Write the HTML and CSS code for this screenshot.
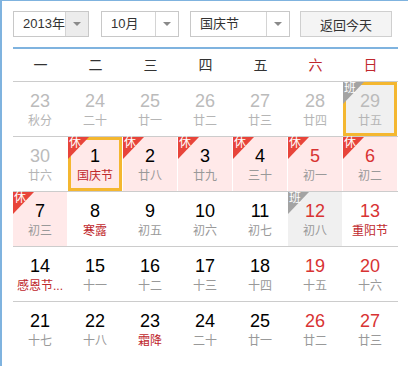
FILE: index.html
```html
<!DOCTYPE html>
<html lang="zh-CN">
<head>
    <meta charset="UTF-8">
    <title>万年历</title>
    <link rel="stylesheet" href="styles.css">
</head>
<body>

    <div class="calendar">
        <div class="toolbar">
            <div class="select select-year hover">
                <span class="select-text">2013年</span>
                <span class="select-arrow"></span>
            </div>
            <div class="select select-month">
                <span class="select-text">10月</span>
                <span class="select-arrow"></span>
            </div>
            <div class="select select-holiday">
                <span class="select-text">国庆节</span>
                <span class="select-arrow"></span>
            </div>
            <button class="today-btn">返回今天</button>
        </div>

        <div class="weekdays">
            <span>一</span><span>二</span><span>三</span><span>四</span><span>五</span>
            <span class="weekend">六</span><span class="weekend">日</span>
        </div>

        <div class="week">
            <div class="day other"><b>23</b><i>秋分</i></div>
            <div class="day other"><b>24</b><i>二十</i></div>
            <div class="day other"><b>25</b><i>廿一</i></div>
            <div class="day other"><b>26</b><i>廿二</i></div>
            <div class="day other"><b>27</b><i>廿三</i></div>
            <div class="day other"><b>28</b><i>廿四</i></div>
            <div class="day other work selected"><span class="badge">班</span><b>29</b><i>廿五</i></div>
        </div>

        <div class="week">
            <div class="day other"><b>30</b><i>廿六</i></div>
            <div class="day rest selected"><span class="badge">休</span><b>1</b><i class="fest">国庆节</i></div>
            <div class="day rest"><span class="badge">休</span><b>2</b><i>廿八</i></div>
            <div class="day rest"><span class="badge">休</span><b>3</b><i>廿九</i></div>
            <div class="day rest"><span class="badge">休</span><b>4</b><i>三十</i></div>
            <div class="day rest red"><span class="badge">休</span><b>5</b><i>初一</i></div>
            <div class="day rest red"><span class="badge">休</span><b>6</b><i>初二</i></div>
        </div>

        <div class="week">
            <div class="day rest"><span class="badge">休</span><b>7</b><i>初三</i></div>
            <div class="day"><b>8</b><i class="fest">寒露</i></div>
            <div class="day"><b>9</b><i>初五</i></div>
            <div class="day"><b>10</b><i>初六</i></div>
            <div class="day"><b>11</b><i>初七</i></div>
            <div class="day work red"><span class="badge">班</span><b>12</b><i>初八</i></div>
            <div class="day red"><b>13</b><i class="fest">重阳节</i></div>
        </div>

        <div class="week">
            <div class="day"><b>14</b><i class="fest">感恩节...</i></div>
            <div class="day"><b>15</b><i>十一</i></div>
            <div class="day"><b>16</b><i>十二</i></div>
            <div class="day"><b>17</b><i>十三</i></div>
            <div class="day"><b>18</b><i>十四</i></div>
            <div class="day red"><b>19</b><i>十五</i></div>
            <div class="day red"><b>20</b><i>十六</i></div>
        </div>

        <div class="week">
            <div class="day"><b>21</b><i>十七</i></div>
            <div class="day"><b>22</b><i>十八</i></div>
            <div class="day"><b>23</b><i class="fest">霜降</i></div>
            <div class="day"><b>24</b><i>二十</i></div>
            <div class="day"><b>25</b><i>廿一</i></div>
            <div class="day red"><b>26</b><i>廿二</i></div>
            <div class="day red"><b>27</b><i>廿三</i></div>
        </div>
    </div>

</body>
</html>
```

FILE: styles.css
```css
* {
    margin: 0;
    padding: 0;
    box-sizing: border-box;
    font-family: "Liberation Sans", "Noto Sans CJK SC", sans-serif;
}

body {
    background: #fff;
    width: 408px;
    height: 366px;
    overflow: hidden;
}

.calendar {
    border-left: 2px solid #7fb3df;
    border-top: 1px solid #7fb3df;
    height: 366px;
    padding: 10px 0 0 11px;
}

/* Toolbar */
.toolbar {
    display: flex;
    align-items: center;
    width: 385px;
    height: 26px;
    margin-bottom: 10px;
}

.select {
    display: flex;
    height: 26px;
    border: 1px solid #c8c8c8;
    background: #fff;
    font-size: 13px;
    color: #333;
}

.select-text {
    flex: 1;
    line-height: 24px;
    padding-left: 9px;
}

.select-arrow {
    width: 23px;
    border-left: 1px solid #d4d4d4;
    display: flex;
    align-items: center;
    justify-content: center;
}

.select-arrow::after {
    content: "";
    border-top: 4px solid #8a8a8a;
    border-left: 4px solid transparent;
    border-right: 4px solid transparent;
}

.hover .select-arrow {
    background: #ececec;
}

.select-year {
    width: 76px;
    margin-right: 12px;
}

.select-month {
    width: 78px;
    margin-right: 11px;
}

.select-holiday {
    width: 100px;
    margin-right: 10px;
}

.today-btn {
    width: 92px;
    height: 26px;
    border: 1px solid #cfcfcf;
    background: #f4f4f4;
    font-size: 13px;
    color: #333;
}

/* Weekday header */
.weekdays {
    display: flex;
    width: 385px;
    height: 34px;
    border-top: 2px solid #7fb3df;
}

.weekdays span {
    width: 55px;
    text-align: center;
    line-height: 33px;
    font-size: 14px;
    color: #333;
}

.weekdays .weekend {
    color: #c0282d;
}

/* Day grid */
.week {
    display: flex;
    width: 385px;
    border-top: 1px solid #cccccc;
}

.day {
    position: relative;
    width: 54px;
    height: 54px;
    margin-right: 1px;
    padding-top: 9px;
    display: flex;
    flex-direction: column;
    align-items: center;
}

.day b {
    font-weight: normal;
    font-size: 18px;
    line-height: 21px;
    color: #000;
}

.day i {
    font-style: normal;
    font-size: 12px;
    line-height: 19px;
    color: #999;
    white-space: nowrap;
}

.day.red b {
    color: #d83333;
}

.day.other b {
    color: #bbbbbb;
}

.day.other i {
    color: #b5b5b5;
}

.day i.fest {
    color: #c0282d;
}

.day.rest {
    background: #ffe9e9;
}

.day.work {
    background: #f0f0f0;
}

.day.selected {
    box-shadow: inset 0 0 0 3px #f4b730;
}

/* Holiday badge */
.badge {
    position: absolute;
    top: 0;
    left: 0;
    width: 21px;
    height: 22px;
    font-size: 12px;
    line-height: 13px;
    padding-left: 1px;
    color: #fff;
    z-index: 1;
}

.badge::before {
    content: "";
    position: absolute;
    top: 0;
    left: 0;
    width: 21px;
    height: 22px;
    background: #e8443a;
    clip-path: polygon(0 0, 100% 0, 0 100%);
    z-index: -1;
}

.work .badge::before {
    background: #a3a3a3;
}
```
